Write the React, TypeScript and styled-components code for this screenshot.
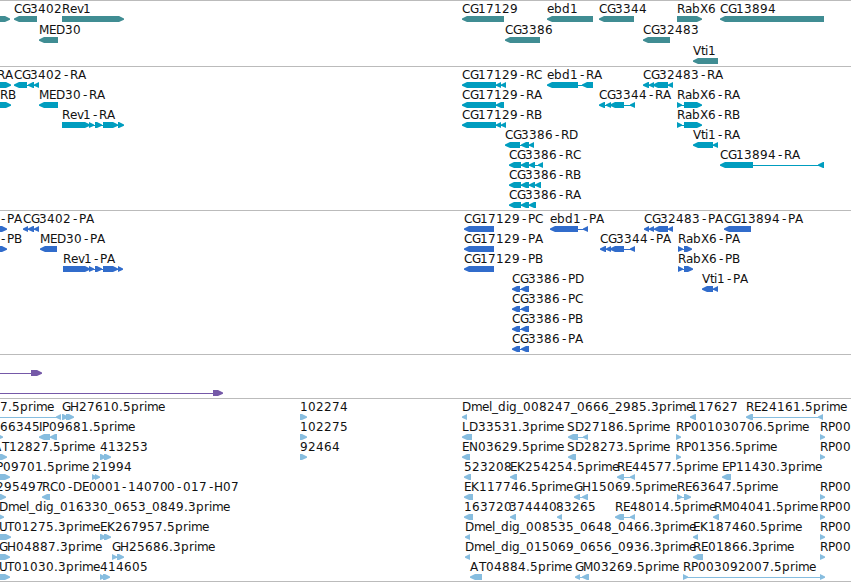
import React from 'react';
import styled, { createGlobalStyle } from 'styled-components';

const GlobalStyle = createGlobalStyle`
  body {
    margin: 0;
    background: #fff;
    overflow: hidden;
  }
`;

const Browser = styled.main`
  display: flex;
  flex-direction: column;
  width: 851px;
  height: 582px;
  overflow: hidden;
  background: #fff;
`;

const TrackRow = styled.section<{ $height: number }>`
  flex: none;
  box-sizing: border-box;
  height: ${({ $height }) => $height}px;
  border-top: 1px solid #bbb;
  overflow: hidden;
`;

const Bottom = styled.div`
  flex: none;
  height: 1px;
  background: #bbb;
`;

const Plot = styled.svg<{ $color: string }>`
  display: block;
  width: 851px;
  height: 100%;
  fill: ${({ $color }) => $color};
`;

const Label = styled.text`
  font-family: 'DejaVu Sans', sans-serif;
  font-size: 12px;
  fill: #111;
`;

type Dir = 'l' | 'r';
type Exon = [start: number, end: number];

interface Feature {
  row: number;
  dir: Dir;
  exons: Exon[];
  label?: string;
  from: number;
  to: number;
}

// row, direction, exons, label, label start, label end
const f = (
  row: number,
  dir: Dir,
  exons: Exon[],
  label = '',
  from = 0,
  to = 0
): Feature => ({ row, dir, exons, label, from, to });

const genes: Feature[] = [
  f(0, 'r', [[-20, 10]]),
  f(0, 'l', [[14, 37]], 'CG3402', 14, 61.7),
  f(0, 'r', [[62, 124]], 'Rev1', 62, 90.5),
  f(0, 'l', [[462, 504]], 'CG17129', 462, 518.5),
  f(0, 'l', [[547, 593]], 'ebd1', 547, 577.7),
  f(0, 'l', [[599, 634]], 'CG3344', 599, 647.5),
  f(0, 'r', [[677, 702]], 'RabX6', 677, 715.5),
  f(0, 'l', [[720, 824]], 'CG13894', 720, 776.5),
  f(1, 'l', [[39, 58]], 'MED30', 39, 80.5),
  f(1, 'l', [[505, 540]], 'CG3386', 505, 553.5),
  f(1, 'l', [[643, 670]], 'CG32483', 643, 698.7),
  f(2, 'l', [[693, 718]], 'Vti1', 693, 715.7),
];

const transcripts: Feature[] = [
  f(0, 'r', [[-20, 11]], 'RA', -3, 12.7),
  f(0, 'l', [[14, 27], [28, 34], [34, 39]], 'CG3402-RA', 14, 86.7),
  f(0, 'l', [[462, 496], [496, 501], [501, 506]], 'CG17129-RC', 462, 541.7),
  f(0, 'l', [[547, 578], [582, 593]], 'ebd1-RA', 547, 602),
  f(0, 'l', [[643, 649], [649, 654], [653, 668], [668, 673]], 'CG32483-RA', 643, 723.7),
  f(1, 'r', [[-20, 11]], 'RB', 0, 14.5),
  f(1, 'l', [[39, 58]], 'MED30-RA', 39, 104.7),
  f(1, 'l', [[462, 496], [496, 504]], 'CG17129-RA', 462, 543),
  f(1, 'l', [[599, 605], [606, 611], [610, 624], [630, 635]], 'CG3344-RA', 599, 672),
  f(1, 'r', [[677, 682], [684, 702]], 'RabX6-RA', 677, 740),
  f(2, 'r', [[62, 90], [89, 94], [95, 102], [103, 118], [118, 124]], 'Rev1-RA', 62, 115),
  f(2, 'l', [[462, 496], [496, 501], [501, 506]], 'CG17129-RB', 462, 540.7),
  f(2, 'r', [[677, 682], [684, 702]], 'RabX6-RB', 677, 738),
  f(3, 'l', [[505, 520], [521, 529], [529, 534]], 'CG3386-RD', 505, 577.7),
  f(3, 'l', [[693, 713], [713, 718]], 'Vti1-RA', 693, 740),
  f(4, 'l', [[509, 521], [521, 529], [529, 535], [538, 543]], 'CG3386-RC', 509, 580.7),
  f(4, 'l', [[720, 753], [818, 824]], 'CG13894-RA', 720, 801),
  f(5, 'l', [[509, 521], [521, 529], [529, 535], [535, 541]], 'CG3386-RB', 509, 579.7),
  f(6, 'l', [[509, 521], [521, 529], [529, 536]], 'CG3386-RA', 509, 582),
];

const proteins: Feature[] = [
  f(0, 'r', [[-20, 7]], '-PA', -1, 23),
  f(0, 'l', [[23, 28], [28, 34], [34, 39]], 'CG3402-PA', 23, 95.3),
  f(0, 'l', [[464, 494]], 'CG17129-PC', 464, 542.7),
  f(0, 'l', [[550, 578], [583, 588]], 'ebd1-PA', 550, 604),
  f(0, 'l', [[644, 649], [649, 654], [654, 668], [668, 673]], 'CG32483-PA', 644, 723.7),
  f(0, 'l', [[724, 751]], 'CG13894-PA', 724, 804),
  f(1, 'r', [[-20, 7]], '-PB', -1, 20.7),
  f(1, 'l', [[40, 57]], 'MED30-PA', 40, 105),
  f(1, 'l', [[464, 494]], 'CG17129-PA', 464, 544),
  f(1, 'l', [[600, 606], [606, 611], [610, 624], [630, 635]], 'CG3344-PA', 600, 672),
  f(1, 'r', [[678, 683], [684, 692]], 'RabX6-PA', 678, 740),
  f(2, 'r', [[63, 90], [89, 94], [95, 102], [103, 118], [118, 123]], 'Rev1-PA', 63, 115),
  f(2, 'l', [[464, 494]], 'CG17129-PB', 464, 541.7),
  f(2, 'r', [[678, 683], [684, 693]], 'RabX6-PB', 678, 738),
  f(3, 'l', [[512, 520], [521, 529]], 'CG3386-PD', 512, 583.7),
  f(3, 'l', [[702, 713], [713, 718]], 'Vti1-PA', 702, 748),
  f(4, 'l', [[512, 520], [521, 529]], 'CG3386-PC', 512, 582.7),
  f(5, 'l', [[512, 520], [521, 529]], 'CG3386-PB', 512, 581.7),
  f(6, 'l', [[512, 520], [521, 529]], 'CG3386-PA', 512, 584),
];

const insertions: Feature[] = [
  f(0, 'r', [[-20, -10], [31, 42]]),
  f(1, 'r', [[-20, -10], [213, 223]]),
];

const ests: Feature[] = [
  f(0, 'l', [[-20, -10], [56, 61]], '7.5prime', 0, 53.7),
  f(0, 'r', [[62, 68], [66, 74]], 'GH27610.5prime', 62, 165.7),
  f(0, 'r', [[300, 307]], '102274', 300, 347.7),
  f(0, 'l', [[462, 467]], 'Dmel_dig_008247_0666_2985.3prime', 462, 691.7),
  f(0, 'l', [[690, 696]], '117627', 690, 737.5),
  f(0, 'l', [[746, 753], [818, 823]], 'RE24161.5prime', 746, 846.7),
  f(1, 'r', [[-20, 3]], '66345', 0, 38.7),
  f(1, 'l', [[39, 50], [50, 57]], 'IP09681.5prime', 39, 134.7),
  f(1, 'r', [[300, 307]], '102275', 300, 347),
  f(1, 'l', [[462, 472]], 'LD33531.3prime', 462, 562.7),
  f(1, 'l', [[568, 578], [583, 588]], 'SD27186.5prime', 567, 668.7),
  f(1, 'r', [[676, 681]], 'RP001030706.5prime', 676, 808.7),
  f(1, 'r', [[820, 825]], 'RP00', 820, 850.5),
  f(2, 'r', [[-20, 7]], 'AT12827.5prime', -7, 93.7),
  f(2, 'r', [[100, 106], [104, 111]], '413253', 100, 146.7),
  f(2, 'r', [[300, 307]], '92464', 300, 339.5),
  f(2, 'l', [[462, 470]], 'EN03629.5prime', 462, 563.5),
  f(2, 'l', [[568, 576]], 'SD28273.5prime', 567, 668.7),
  f(2, 'r', [[676, 681]], 'RP01356.5prime', 676, 776.7),
  f(2, 'r', [[820, 825]], 'RP00', 820, 850.5),
  f(3, 'r', [[-20, 10]], 'P09701.5prime', -4, 88.5),
  f(3, 'r', [[92, 97], [95, 100]], '21994', 92, 131.5),
  f(3, 'l', [[464, 471]], '523208', 464, 511),
  f(3, 'l', [[510, 517]], 'EK254254.5prime', 510, 618.7),
  f(3, 'l', [[617, 624], [630, 635]], 'RE44577.5prime', 617, 717.7),
  f(3, 'l', [[722, 731]], 'EP11430.3prime', 722, 822.7),
  f(4, 'r', [[-20, 6]], '295497', -4, 43),
  f(4, 'l', [[42, 50]], 'RC0-DE0001-140700-017-H07', 42, 238.5),
  f(4, 'l', [[464, 473]], 'EK117746.5prime', 464, 572.7),
  f(4, 'l', [[574, 580], [582, 588]], 'GH15069.5prime', 574, 677.5),
  f(4, 'r', [[677, 682], [684, 691]], 'RE63647.5prime', 677, 777.5),
  f(4, 'r', [[820, 825]], 'RP00', 820, 850.5),
  f(5, 'r', [[-20, 4]], 'Dmel_dig_016330_0653_0849.3prime', -1, 228.7),
  f(5, 'l', [[464, 473]], '163720', 464, 511),
  f(5, 'l', [[510, 516]], '374440', 509, 557),
  f(5, 'l', [[557, 562]], '83265', 556, 595.7),
  f(5, 'l', [[615, 624], [630, 635]], 'RE48014.5prime', 615, 716),
  f(5, 'l', [[713, 719]], 'RM04041.5prime', 714, 817.7),
  f(5, 'r', [[820, 825]], 'RP00', 820, 850.5),
  f(6, 'r', [[-20, 11]], 'UT01275.3prime', -1, 100.5),
  f(6, 'r', [[100, 106], [104, 111]], 'EK267957.5prime', 100, 208.7),
  f(6, 'l', [[465, 470]], 'Dmel_dig_008535_0648_0466.3prime', 465, 694.7),
  f(6, 'l', [[693, 698]], 'EK187460.5prime', 693, 801.7),
  f(6, 'r', [[820, 825]], 'RP00', 820, 850.5),
  f(7, 'r', [[-20, 10]], 'GH04887.3prime', -1, 102.7),
  f(7, 'r', [[112, 117], [117, 124]], 'GH25686.3prime', 112, 215.9),
  f(7, 'l', [[465, 470]], 'Dmel_dig_015069_0656_0936.3prime', 465, 694.7),
  f(7, 'l', [[693, 703]], 'RE01866.3prime', 693, 793.7),
  f(7, 'r', [[820, 825]], 'RP00', 820, 850.5),
  f(8, 'r', [[-20, 10]], 'UT01030.3prime', -1, 100.5),
  f(8, 'r', [[100, 105], [103, 110]], '414605', 100, 146.7),
  f(8, 'l', [[470, 482]], 'AT04884.5prime', 470, 571.7),
  f(8, 'l', [[575, 580], [582, 589]], 'GM03269.5prime', 575, 679.5),
  f(8, 'r', [[683, 688], [820, 825]], 'RP003092007.5prime', 683, 815.7),
];

const tracks = [
  { id: 'genes', color: '#408d93', height: 66, pitch: 21, features: genes },
  { id: 'transcripts', color: '#009dbf', height: 144, pitch: 20, features: transcripts },
  { id: 'proteins', color: '#316ccb', height: 144, pitch: 20, features: proteins },
  { id: 'insertions', color: '#7559a8', height: 44, pitch: 20, features: insertions },
  { id: 'ests', color: '#87bddf', height: 183, pitch: 20, features: ests },
];

// whole-pixel advances; anything not listed is 8 (all the digits are)
const advances: Record<string, number> = {
  A: 9, B: 7, C: 8, D: 9, E: 7, G: 8, H: 9, I: 3, L: 7, M: 10, N: 9, P: 7, S: 8, T: 7,
  a: 7, e: 7, i: 3, l: 3, m: 11, r: 5, t: 4, v: 6, _: 6, '.': 4,
};

function glyphPositions(label: string, from: number, to: number) {
  const widths = label.split('').map((c) => advances[c] ?? 8);
  const total = widths.reduce((a, b) => a + b, 0);
  const room = to - from + 0.5;
  // only stretch or squeeze when the label is clearly off its room
  const scale = Math.abs(room - total) > 1.6 ? room / total : 1;
  let x = 0;
  return widths
    .map((w, i) => {
      // the hyphen is narrower than its cell, so centre it
      const shift = label[i] === '-' ? 2 : 0;
      const at = Math.round(from + x * scale) + shift;
      x += w;
      return at;
    })
    .join(' ');
}

function arrow([start, end]: Exon, dir: Dir, y: number) {
  const head = Math.min(5, end - start);
  const tip = dir === 'l' ? start : end;
  const base = dir === 'l' ? end : start;
  const neck = dir === 'l' ? start + head : end - head;
  return `${tip},${y + 2.4} ${neck},${y} ${base},${y} ${base},${y + 6} ${neck},${y + 6} ${tip},${y + 3.8}`;
}

function FeatureGlyph({ feature, pitch }: { feature: Feature; pitch: number }) {
  const { row, dir, exons, label, from, to } = feature;
  const top = row * pitch;
  const first = exons[0][0];
  const last = exons[exons.length - 1][1];
  return (
    <g>
      {exons.length > 1 && (
        <rect x={first + 1} y={top + 18} width={last - first - 2} height={1} />
      )}
      {exons.map((exon) => (
        <polygon key={exon[0]} points={arrow(exon, dir, top + 15)} />
      ))}
      {label && (
        <Label x={glyphPositions(label, from, to)} y={top + 12}>
          {label}
        </Label>
      )}
    </g>
  );
}

export default function App() {
  return (
    <>
      <GlobalStyle />
      <Browser>
        {tracks.map(({ id, color, height, pitch, features }) => (
          <TrackRow key={id} $height={height}>
            <Plot $color={color}>
              {features.map((feature, i) => (
                <FeatureGlyph key={i} feature={feature} pitch={pitch} />
              ))}
            </Plot>
          </TrackRow>
        ))}
        <Bottom />
      </Browser>
    </>
  );
}
